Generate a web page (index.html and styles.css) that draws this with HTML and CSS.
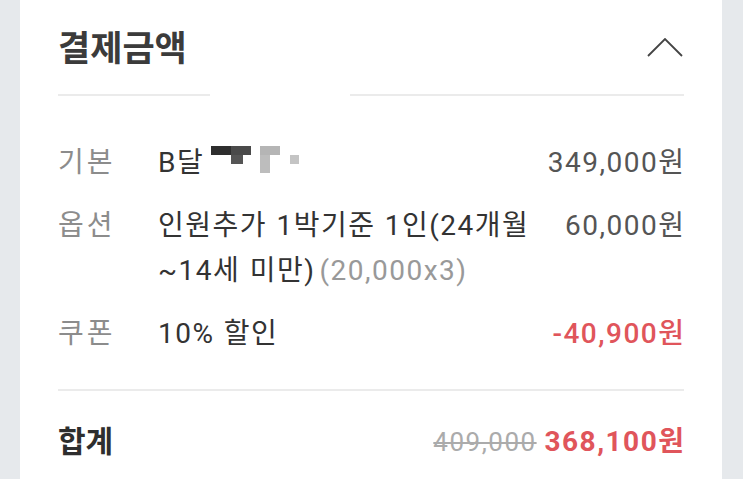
FILE: index.html
```html
<!DOCTYPE html>
<html lang="ko">
<head>
  <meta charset="UTF-8">
  <title>결제금액</title>
  <link rel="stylesheet" href="styles.css">
</head>
<body>
  <div class="card">
    <div class="card-head">
      <h2>결제금액</h2>
      <svg class="chevron" width="36" height="20" viewBox="0 0 36 20">
        <polyline points="1,18 18,1 35,18" fill="none" stroke="#444" stroke-width="1.8"/>
      </svg>
    </div>
    <div class="divider split"></div>

    <div class="rows">
      <div class="row">
        <span class="label">기본</span>
        <span class="value"><span class="num">B</span>달<span class="mosaic">
          <i class="m1"></i><i class="m2"></i><i class="m3"></i><i class="m4"></i><i class="m5"></i><i class="m6"></i>
        </span></span>
        <span class="price"><span class="num">349,000</span>원</span>
      </div>
      <div class="row">
        <span class="label">옵션</span>
        <span class="value">인원추가 <span class="num">1</span>박기준 <span class="num">1</span>인<span class="num">(24</span>개월 <span class="num">~14</span>세 미만<span class="num">)</span><span class="sub num">(20,000x3)</span></span>
        <span class="price"><span class="num">60,000</span>원</span>
      </div>
      <div class="row">
        <span class="label">쿠폰</span>
        <span class="value"><span class="num">10%</span> 할인</span>
        <span class="price red"><span class="num">-40,900</span>원</span>
      </div>
    </div>

    <div class="divider"></div>

    <div class="total">
      <span class="total-label">합계</span>
      <span class="total-price"><s class="num">409,000</s> <b><span class="num">368,100</span>원</b></span>
    </div>
  </div>
</body>
</html>
```

FILE: styles.css
```css
body {
  margin: 0;
  padding: 0 21px 0 20px;
  background: #e6e9ec;
  height: 479px;
  overflow: hidden;
  font-family: Roboto, "Noto Sans CJK KR", sans-serif;
}

.card {
  background: #fff;
  height: 100%;
  padding: 0 38px 0 38px;
}

.card-head {
  display: flex;
  justify-content: space-between;
  align-items: center;
  height: 94px;
}

.card-head h2 {
  margin: 0 0 4px 0;
  font-size: 35px;
  font-weight: 700;
  color: #3b3b3b;
  font-family: "Noto Sans CJK KR", sans-serif;
}

.chevron {
  margin-right: 1px;
  margin-top: 2px;
}

.divider {
  height: 2px;
  background: #ebebeb;
}

/* 가운데 끊긴 구분선 */
.divider.split {
  background: linear-gradient(to right, #ebebeb 0, #ebebeb 152px, transparent 152px, transparent 292px, #ebebeb 292px);
}

/* 숫자는 Roboto에 자간을 조금 */
.num {
  font-family: Roboto, sans-serif;
  letter-spacing: 1.5px;
  line-height: 1;
}

.rows {
  padding: 42px 0 35px;
  display: flex;
  flex-direction: column;
  gap: 18px;
}

.row {
  display: flex;
  align-items: flex-start;
  font-size: 28px;
  line-height: 45px;
  font-family: "Noto Sans CJK KR", sans-serif;
}

.label {
  width: 100px;
  flex-shrink: 0;
  color: #8c8c8c;
  letter-spacing: 3px;
}

.value {
  flex: 1;
  color: #333;
  padding-right: 16px;
  letter-spacing: 1.5px;
}

.sub {
  color: #999;
  margin-left: 4px;
}

.price {
  color: #555;
  white-space: nowrap;
}

.red {
  color: #e0555b;
  font-weight: 500;
}

.mosaic {
  display: inline-block;
  position: relative;
  width: 90px;
  height: 28px;
  vertical-align: -2px;
  margin-left: 7px;
}

.mosaic i {
  position: absolute;
}

.m1 { left: 0; top: 0; width: 20px; height: 9px; background: #2e2e2e; }
.m2 { left: 20px; top: 0; width: 20px; height: 9px; background: #4a4a4a; }
.m3 { left: 20px; top: 9px; width: 12px; height: 9px; background: #555; }
.m4 { left: 49px; top: 0; width: 20px; height: 9px; background: #b5b5b5; }
.m5 { left: 49px; top: 9px; width: 10px; height: 18px; background: #bdbdbd; }
.m6 { left: 79px; top: 9px; width: 9px; height: 9px; background: #c4c4c4; }

.total {
  display: flex;
  justify-content: space-between;
  align-items: center;
  height: 96px;
}

.total-label {
  font-family: "Noto Sans CJK KR", sans-serif;
  font-size: 30px;
  font-weight: 700;
  color: #2e2e2e;
}

.total-price {
  font-family: "Noto Sans CJK KR", sans-serif;
  font-size: 28px;
}

.total-price s {
  color: #ababab;
  font-size: 26px;
}

.total-price b {
  color: #e0555b;
  font-weight: 700;
}
```
